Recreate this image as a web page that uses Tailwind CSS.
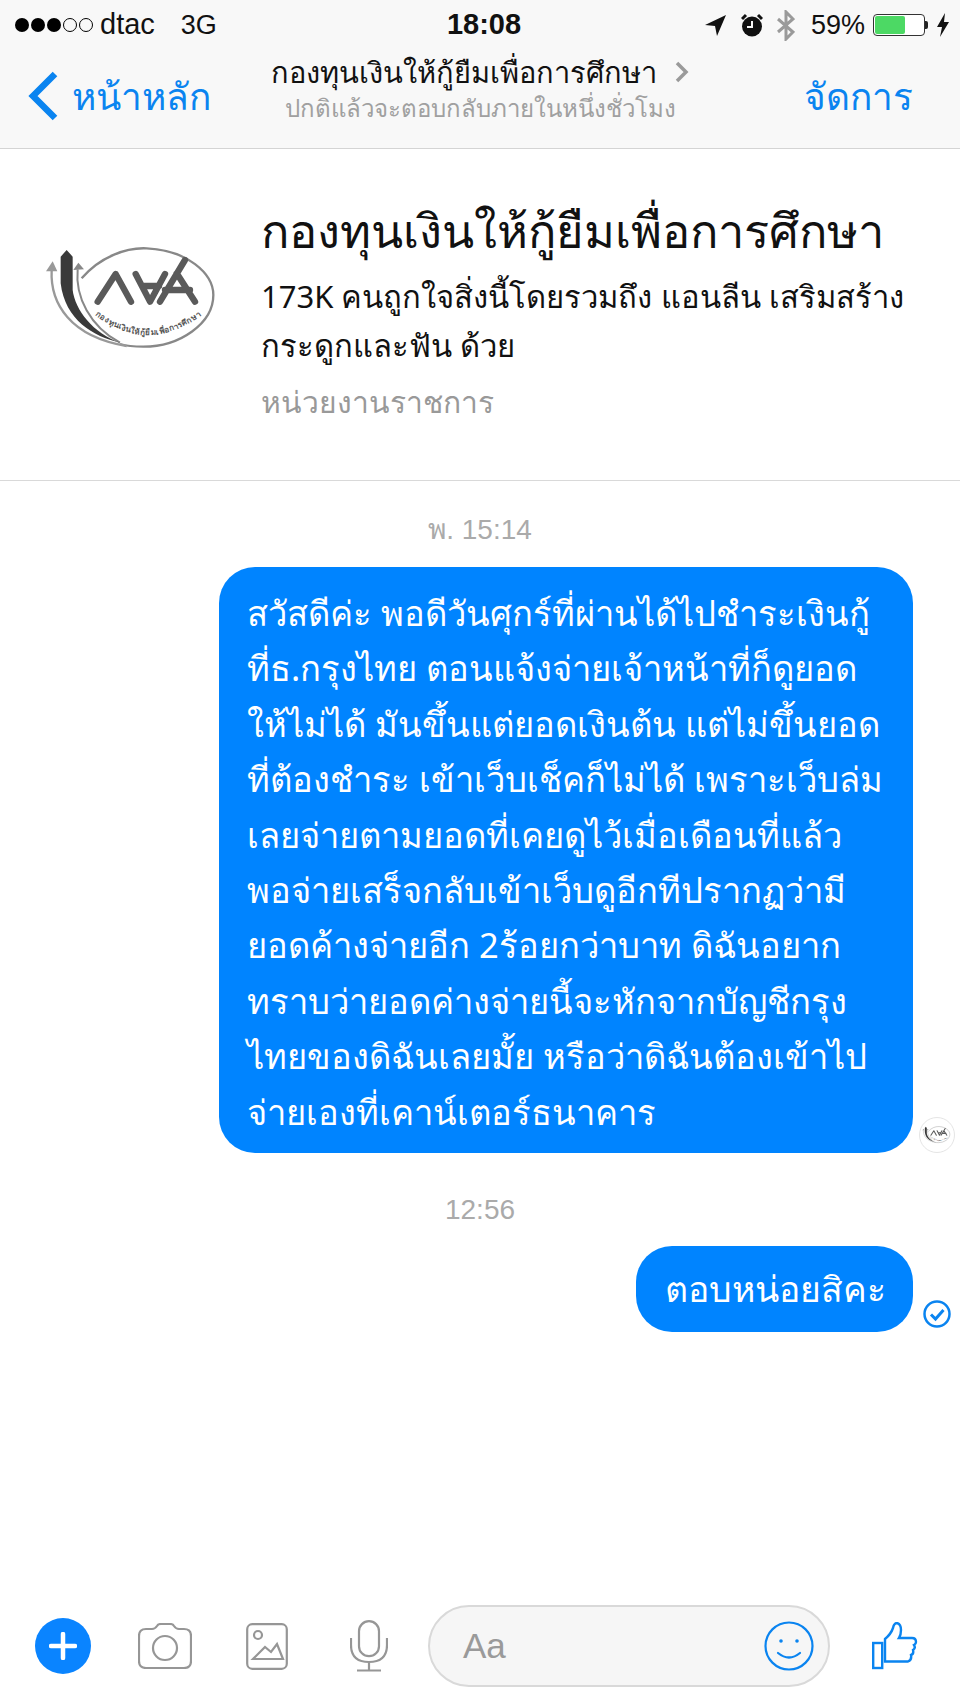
<!DOCTYPE html>
<html lang="th">
  <head>
    <meta charset="UTF-8" />
    <meta name="viewport" content="width=device-width, initial-scale=1.0" />
    <title>Messenger</title>
    <script src="https://cdn.jsdelivr.net/npm/@tailwindcss/browser@4"></script>
  </head>

  <body class="bg-white font-['Noto_Sans','Liberation_Sans',sans-serif]">
    <div class="w-[960px] h-[1707px] flex flex-col overflow-hidden">
      <!-- Status bar + nav -->
      <header class="h-[149px] shrink-0 bg-[#f8f8f8] border-b border-[#d4d4d4] flex flex-col">
        <div class="h-[50px] pl-[15px] pr-[11px] flex items-center justify-between text-[#111] font-['Liberation_Sans',sans-serif]">
          <div class="w-[330px] flex items-center">
            <span class="flex gap-[2px] items-center">
              <i class="w-[14px] h-[14px] rounded-full bg-black"></i>
              <i class="w-[14px] h-[14px] rounded-full bg-black"></i>
              <i class="w-[14px] h-[14px] rounded-full bg-black"></i>
              <i class="w-[14px] h-[14px] rounded-full border border-black"></i>
              <i class="w-[14px] h-[14px] rounded-full border border-black"></i>
            </span>
            <span class="ml-[7px] text-[29px]">dtac</span>
            <span class="ml-[26px] text-[27px]">3G</span>
          </div>
          <div class="font-bold text-[29px] ml-[4px]">18:08</div>
          <div class="w-[330px] flex items-center justify-end">
            <svg width="22" height="21" viewBox="0 0 22 21"><path d="M0 10 L21 0 L12 21 L10 11 Z" fill="#111"/></svg>
            <svg class="ml-[14px]" width="22" height="24" viewBox="0 0 22 24"><circle cx="11" cy="13.500" r="10" fill="#111"/><path d="M11 8v6h-5" stroke="#f8f8f8" stroke-width="2" fill="none"/><path d="M1 6l4-4M21 6l-4-4" stroke="#111" stroke-width="3"/></svg>
            <svg class="ml-[14px]" width="18" height="31" viewBox="0 0 18 31"><path d="M1 9l15 13-7 7V2l7 7L1 22" stroke="#9a9a9a" stroke-width="3" fill="none"/></svg>
            <span class="ml-[16px] text-[27px]">59%</span>
            <span class="flex items-center ml-[8px]">
              <span class="w-[52px] h-[22px] border border-[#333] rounded-[4px] p-[1px] bg-white flex">
                <span class="w-[30px] h-full bg-[#4cd964] rounded-[2px]"></span>
              </span>
              <span class="w-[3px] h-[8px] bg-[#222] rounded-r-[2px]"></span>
            </span>
            <svg class="ml-[9px]" width="12" height="24" viewBox="0 0 12 24"><path d="M8 0 L0 14 H5 L3 24 L12 9 H7 Z" fill="#111"/></svg>
          </div>
        </div>
        <div class="flex-1 relative flex items-start">
          <div class="w-[240px] pl-[28px] pt-[21px] flex items-center text-[#0a84f0]">
            <svg width="32" height="50" viewBox="0 0 32 50"><path d="M27 3 L5 25 L27 47" stroke="#0a84f0" stroke-width="6.500" fill="none"/></svg>
            <span class="ml-[12px] text-[37px] leading-[50px]">หน้าหลัก</span>
          </div>
          <div class="flex-1 text-center">
            <div class="flex items-center justify-center h-[40px] pt-[4px]">
              <span class="text-[29px] font-medium text-[#111]">กองทุนเงินให้กู้ยืมเพื่อการศึกษา</span>
              <svg class="ml-[18px]" width="14" height="24" viewBox="0 0 14 24"><path d="M2 3 L11 12 L2 21" stroke="#9a9a9a" stroke-width="3.500" fill="none"/></svg>
            </div>
            <div class="mt-[3px] text-[24px] leading-[30px] text-[#a0a0a0]">ปกติแล้วจะตอบกลับภายในหนึ่งชั่วโมง</div>
          </div>
          <div class="w-[240px] pr-[47px] pt-[21px] text-right text-[#0a84f0] text-[37px] leading-[50px]">จัดการ</div>
        </div>
      </header>

      <!-- Page info -->
      <section class="h-[332px] shrink-0 border-b border-[#d9d9d9] flex">
        <div class="w-[261px] shrink-0 pl-[45px] pt-[96px]">
          <svg width="180" height="110" viewBox="135 165 540 330">
            <g id="fund-logo">
              <path d="M245 265 C300 200 380 172 440 175 C560 180 640 250 640 315 C640 400 540 470 430 470 C400 470 380 468 360 462" fill="none" stroke="#888" stroke-width="7"/>
              <path d="M155 240 C150 340 210 440 380 468" fill="none" stroke="#999" stroke-width="7"/>
              <path d="M138 244 L158 214 L172 244 Z" fill="#999"/>
              <path d="M233 238 C225 320 270 410 360 458" fill="none" stroke="#888" stroke-width="6"/>
              <path d="M220 240 L235 218 L252 238 Z" fill="#888"/>
              <path d="M200 180 L218 200 L218 300 C225 360 280 430 360 458 C280 440 195 390 182 280 L182 200 Z" fill="#3a3a3a"/>
              <path d="M293 335 L347 252 L393 335 M407 252 L450 335 L495 252 M427 288 H477 M480 335 L555 210 M530 250 L585 335 M495 300 H570" fill="none" stroke="#5a5a5a" stroke-width="19" stroke-linecap="round" stroke-linejoin="round"/>
              <path id="fund-logo-curve" d="M285 375 Q442 495 604 375" fill="none"/>
              <text font-size="24" font-weight="700" fill="#555"><textPath href="#fund-logo-curve" textLength="345">กองทุนเงินให้กู้ยืมเพื่อการศึกษา</textPath></text>
            </g>
          </svg>
        </div>
        <div class="pt-[51px]">
          <h1 class="text-[47px] leading-[60px] text-[#111] whitespace-nowrap">กองทุนเงินให้กู้ยืมเพื่อการศึกษา</h1>
          <p class="mt-[12px] text-[31px] leading-[49px] text-[#111] whitespace-nowrap">173K คนถูกใจสิ่งนี้โดยรวมถึง แอนลีน เสริมสร้าง<br />กระดูกและฟัน ด้วย</p>
          <p class="mt-[10px] text-[30px] leading-[44px] text-[#999]">หน่วยงานราชการ</p>
        </div>
      </section>

      <!-- Conversation -->
      <main class="flex-1 flex flex-col">
        <div class="h-[86px] flex items-center justify-center pt-[12px] text-[28px] text-[#aaa] font-['Liberation_Sans','Noto_Sans',sans-serif]">พ. 15:14</div>
        <div class="relative self-end mr-[47px] w-[694px] h-[586px] bg-[#0084ff] rounded-[36px] pl-[28px] pt-[18px] text-white text-[34.500px] leading-[55.400px] whitespace-nowrap">
          <p>สวัสดีค่ะ พอดีวันศุกร์ที่ผ่านได้ไปชำระเงินกู้<br />ที่ธ.กรุงไทย ตอนแจ้งจ่ายเจ้าหน้าที่ก็ดูยอด<br />ให้ไม่ได้ มันขึ้นแต่ยอดเงินต้น แต่ไม่ขึ้นยอด<br />ที่ต้องชำระ เข้าเว็บเช็คก็ไม่ได้ เพราะเว็บล่ม<br />เลยจ่ายตามยอดที่เคยดูไว้เมื่อเดือนที่แล้ว<br />พอจ่ายเสร็จกลับเข้าเว็บดูอีกทีปรากฏว่ามี<br />ยอดค้างจ่ายอีก 2ร้อยกว่าบาท ดิฉันอยาก<br />ทราบว่ายอดค่างจ่ายนี้จะหักจากบัญชีกรุง<br />ไทยของดิฉันเลยมั้ย หรือว่าดิฉันต้องเข้าไป<br />จ่ายเองที่เคาน์เตอร์ธนาคาร</p>
          <!-- small avatar next to the bubble -->
          <span class="absolute -right-[42px] bottom-0 w-[36px] h-[36px] rounded-full border border-[#e5e5e5] bg-white flex items-center justify-center">
            <svg width="30" height="18" viewBox="135 165 540 330"><use href="#fund-logo" /></svg>
          </span>
        </div>
        <div class="h-[93px] flex items-center justify-center pt-[20px] text-[28px] text-[#aaa] font-['Liberation_Sans',sans-serif]">12:56</div>
        <div class="relative self-end mr-[47px] w-[277px] h-[86px] pl-[29px] bg-[#0084ff] rounded-[36px] flex items-center text-white text-[35.500px] whitespace-nowrap">
          ตอบหน่อยสิคะ
          <svg class="absolute -right-[38px] bottom-[4px]" width="28" height="28" viewBox="0 0 28 28"><circle cx="14" cy="14" r="12.500" fill="none" stroke="#0a84f0" stroke-width="2.500"/><path d="M8 14.500l4.500 4.500 8-9" fill="none" stroke="#0a84f0" stroke-width="3"/></svg>
        </div>
      </main>

      <!-- Composer -->
      <footer class="h-[117px] shrink-0 flex items-start pt-[15px] pl-[35px]">
        <div class="flex items-center h-[82px]">
          <div class="w-[56px] h-[56px] rounded-full bg-[#0a84ff] flex items-center justify-center">
            <svg width="28" height="28" viewBox="0 0 28 28"><path d="M14 2v24M2 14h24" stroke="#fff" stroke-width="4.500" stroke-linecap="round"/></svg>
          </div>
          <svg class="ml-[47px]" width="54" height="46" viewBox="0 0 54 46" fill="none" stroke="#969696" stroke-width="2.200"><path d="M8 6h6q3 0 5-3 1-2 4-2h9q3 0 4 2 2 3 5 3h5q7 0 7 7v25q0 7-7 7H8q-7 0-7-7V13q0-7 7-7Z"/><circle cx="27" cy="25" r="12"/></svg>
          <svg class="ml-[54px]" width="42" height="47" viewBox="0 0 42 47" fill="none" stroke="#969696" stroke-width="2.200"><rect x="1.200" y="1.200" width="39.600" height="44.600" rx="5"/><circle cx="12" cy="12" r="4"/><path d="M7 36h30L31 21l-6 8-6-5Z"/></svg>
          <svg class="ml-[62px]" width="38" height="52" viewBox="0 0 38 52" fill="none" stroke="#969696" stroke-width="2.200"><rect x="9" y="1.200" width="20" height="35" rx="10"/><path d="M1 18v7q0 17 18 17t18-17v-7M19 42v8M7 50.500h24"/></svg>
          <div class="ml-[40px] w-[402px] h-[82px] rounded-full border-2 border-[#d9d9d9] bg-[#f6f6f6] flex items-center justify-between pl-[33px] pr-[14px]">
            <span class="text-[35px] text-[#9a9a9a] font-['Liberation_Sans',sans-serif]">Aa</span>
            <svg width="50" height="50" viewBox="0 0 50 50" fill="none" stroke="#0a84f0" stroke-width="2.200"><circle cx="25" cy="25" r="23.500"/><circle cx="17" cy="20" r="1.800" fill="#0a84f0" stroke="none"/><circle cx="33" cy="20" r="1.800" fill="#0a84f0" stroke="none"/><path d="M14 32q11 9 22 0" stroke-linecap="round"/></svg>
          </div>
          <svg class="ml-[42px]" width="46" height="48" viewBox="0 0 46 48" fill="none" stroke="#0a84f0" stroke-width="2.400"><rect x="1.200" y="21" width="9" height="25"/><path d="M13 17q6-5 8-11 1-5 4-5 4 1 4 7 0 5-2 8h13q4 0 4 4 0 2-2 3 2 3-1 5 1 4-2 5 1 5-3 6.500H13Z"/></svg>
        </div>
      </footer>
    </div>
  </body>
</html>
